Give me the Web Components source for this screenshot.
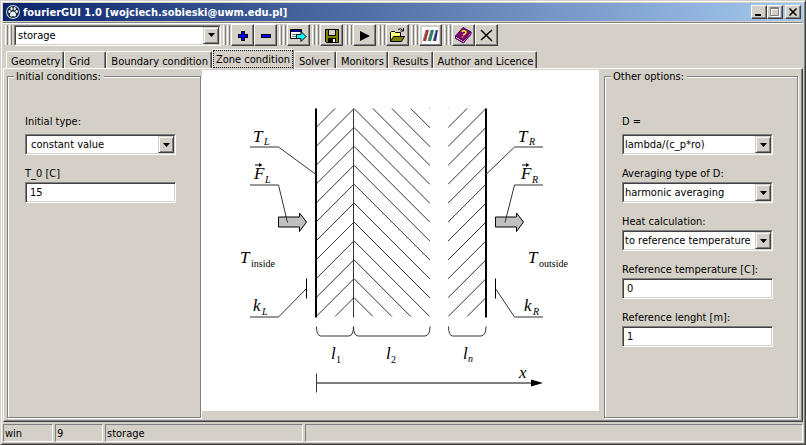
<!DOCTYPE html>
<html lang="en">
<head>
<meta charset="utf-8">
<title>fourierGUI 1.0</title>
<style>
:root{--face:#d4d0c8;--hi:#fff;--sh:#808080;--dk:#404040}
html,body{height:100%;margin:0}
body{background:var(--face);color:#000;font:11px/13px "DejaVu Sans Condensed","DejaVu Sans",sans-serif}
</style>
</head>
<body>
<app-window></app-window>
<script>
const define=(name,html,setup)=>{
  const t=document.createElement('template');
  t.innerHTML=html;
  customElements.define(name,class extends HTMLElement{
    connectedCallback(){
      if(this.shadowRoot)return;
      const root=this.attachShadow({mode:'open'});
      root.append(t.content.cloneNode(true));
      if(setup)setup(this,root);
    }
  });
};

const icons={
  plus:'<path d="M7 4h4v3h3v4h-3v3H7v-3H4V7h3z" fill="#000"/><path d="M8 5h2v3h3v2h-3v3H8v-3H5V8h3z" fill="#00f"/>',
  minus:'<path d="M4 7h10v4H4z" fill="#000"/><path d="M5 8h8v2H5z" fill="#00f"/>',
  send:'<path d="M.5 2.500h11v9H.5z" fill="#fff" stroke="#000"/><path d="M1 3h10v2H1z" fill="#000080"/><path d="M2 7.500h5M2 9.500h5" stroke="#808080"/><path d="M6.500 7.500H11V4.500l5 5-5 5v-3H6.500z" fill="#0ff" stroke="#000"/>',
  save:'<path d="M2.500 2.500h13v13h-12l-1-1z" fill="#808000" stroke="#000"/><path d="M5.500 2.500h7v6h-7z" fill="#d4d0c8" stroke="#000"/><path d="M5 11h8v5H5z" fill="#000"/><path d="M10 12h2v3h-2z" fill="#fff"/>',
  run:'<path d="M4 4l10 5-10 5z" fill="#000"/>',
  open:'<path d="M1.500 14.500v-9l1-1h3l1 1h5v4" fill="#ffff80" stroke="#000"/><path d="M1.500 14.500l3-5h11l-3 5z" fill="#808000" stroke="#000"/><path d="M9 2.500q3-2 5 1M14.500 1v3h-3" fill="none" stroke="#000"/>',
  chart:'<path d="M0 0h17v17H0z" fill="#fff"/><path d="M4 3h3L4 14H1z" fill="#b03030"/><path d="M9 3h3L9 14H6z" fill="#208060"/><path d="M14 3h2l-2 11h-3z" fill="#203080"/><path d="M4 3L1 14M9 3L6 14M14 3l-3 11" stroke="#888" fill="none"/>',
  help:'<path d="M.5 9L8 .5l8 4.500-7.500 9z" fill="#800080" stroke="#400040"/><path d="M.5 9v2.500l8 4.500 7.500-9V5l-7.500 9z" fill="#fff" stroke="#400040"/><path d="M.5 11l8 4.500L16 7" fill="none" stroke="#800080"/><path d="M7 5q1-2 3-1t0 3l-2 1M7.500 9.500v1" fill="none" stroke="#ff0" stroke-width="1.500"/>',
  close:'<path d="M3 3l11 11M14 3L3 13" fill="none" stroke="#000" stroke-width="1.500"/>'
};

define('tool-button',`<style>
:host{display:block}
button{display:grid;place-items:center;width:23px;height:22px;padding:0;background:var(--face);border:1px solid;border-color:var(--hi) var(--dk) var(--dk) var(--hi);box-shadow:inset -1px -1px var(--sh)}
svg{width:17px;height:17px;display:block}
</style><button type="button"><svg viewBox="0 0 17 17"></svg></button>`,(h,r)=>{
  r.querySelector('svg').innerHTML=icons[h.getAttribute('icon')];
  r.querySelector('button').setAttribute('aria-label',h.getAttribute('label'));
});

define('tool-group',`<style>
:host{display:flex;align-items:center}
.grip{width:3px;height:20px;margin-right:1px;box-sizing:border-box;border:solid;border-width:0 1px;border-color:var(--hi) var(--sh) var(--sh) var(--hi)}
</style><span class="grip"></span><span class="grip"></span><slot></slot>`);

const comboStyle=`
.box{display:block;position:relative;height:21px;box-sizing:border-box;background:#fff;border:1px solid;border-color:var(--sh) var(--hi) var(--hi) var(--sh)}
.box select{display:block;width:100%;height:100%;appearance:none;border:1px solid;border-color:var(--dk) var(--face) var(--face) var(--dk);border-radius:0;outline:0;margin:0;padding:0 17px 0 var(--combo-pad,1px);background:#fff;color:#000;font:inherit}
.drop{position:absolute;top:1px;right:1px;bottom:1px;width:16px;box-sizing:border-box;display:grid;place-items:center;pointer-events:none;background:var(--face);border:1px solid;border-color:var(--face) var(--dk) var(--dk) var(--face);box-shadow:inset 1px 1px var(--hi),inset -1px -1px var(--sh)}
.drop svg{width:7px;height:4px;display:block}`;
const comboMarkup='<span class="box"><select id="c"><option></option></select><span class="drop"><svg viewBox="0 0 7 4"><path d="M0 0h7L3.500 4z"/></svg></span></span>';

define('combo-box',`<style>:host{display:block}${comboStyle}</style>${comboMarkup}`,(h,r)=>{
  r.querySelector('option').textContent=h.getAttribute('value');
  r.querySelector('select').setAttribute('aria-label',h.getAttribute('label'));
});

define('form-field',`<style>
:host{display:grid;gap:2px}
:host([lead]){gap:6px}
label{display:block;white-space:nowrap}
input{display:block;width:100%;height:21px;box-sizing:border-box;margin:0;padding:0 4px;border:1px solid;border-color:var(--sh) var(--hi) var(--hi) var(--sh);box-shadow:inset 1px 1px var(--dk),inset -1px -1px var(--face);border-radius:0;outline:0;background:#fff;color:#000;font:inherit}
${comboStyle}
</style><label for="c"></label>`,(h,r)=>{
  const label=r.querySelector('label'),v=h.getAttribute('value');
  label.textContent=h.getAttribute('label');
  if(h.hasAttribute('choice')){
    label.insertAdjacentHTML('afterend',comboMarkup);
    r.querySelector('option').textContent=v;
  }else{
    label.insertAdjacentHTML('afterend','<input id="c" type="text">');
    r.querySelector('input').value=v;
  }
});

define('group-panel',`<style>
:host{display:flex;flex-direction:column}
fieldset{flex:1;box-sizing:border-box;min-width:0;margin:0 1px 0 0;padding:31px 24px 0 17px;border:1px solid var(--sh);box-shadow:1px 1px var(--hi),inset 1px 1px var(--hi)}
legend{margin-left:-11px;padding:1px 3px 0 2px;line-height:14px;background:var(--face)}
.fields{display:grid;gap:12px}
</style><fieldset><legend></legend><div class="fields"><slot></slot></div></fieldset>`,(h,r)=>{
  r.querySelector('legend').textContent=h.getAttribute('heading');
});

define('tab-item',`<style>
:host{display:block;min-width:42px}
:host([selected]){position:relative;margin:-2px 0 -1px}
button{display:block;width:100%;height:17px;padding:2px 3px 0 4px;text-align:left;white-space:nowrap;font:inherit;color:#000;background:var(--face);border:1px solid;border-color:var(--hi) var(--dk) transparent var(--hi);border-bottom:0;border-radius:2px 2px 0 0;box-shadow:inset -1px 0 var(--sh)}
:host([selected]) button{height:20px;padding:0 3px 1px;border-right-color:var(--sh);box-shadow:none;outline:1px dotted #000;outline-offset:-2px}
</style><button type="button" role="tab"><slot></slot></button>`,(h,r)=>{
  r.querySelector('button').setAttribute('aria-selected',h.hasAttribute('selected'));
});

define('title-bar',`<style>
:host{display:flex;align-items:center;height:18px;padding:0 2px 0 3px;color:#fff;background:linear-gradient(90deg,#0a246a,#a6caf0)}
h1{flex:1;margin:0 0 0 3px;font:inherit;font-weight:700;white-space:nowrap}
.logo{width:14px;height:14px}
button{display:block;width:16px;height:14px;padding:0;background:var(--face);border:1px solid;border-color:var(--hi) var(--dk) var(--dk) var(--hi);box-shadow:inset -1px -1px var(--sh)}
button:last-child{margin-left:2px}
button svg{display:block;width:14px;height:12px}
</style>
<svg class="logo" viewBox="0 0 14 14"><circle cx="7" cy="7" r="7" fill="#c8d4e0"/><circle cx="7" cy="7" r="6" fill="#182838"/><g fill="#e8f0f8"><ellipse cx="3.500" cy="6.500" rx="1.200" ry="1.600"/><ellipse cx="5.500" cy="3.700" rx="1.200" ry="1.700"/><ellipse cx="8.700" cy="3.700" rx="1.200" ry="1.700"/><ellipse cx="10.700" cy="6.500" rx="1.200" ry="1.600"/><path d="M7 6.500c2 0 3.500 2.500 3 4s-2 .8-3 .8-2.500.7-3-.8 1-4 3-4z"/></g></svg>
<h1><slot></slot></h1>
<button type="button" aria-label="Minimize"><svg viewBox="0 0 14 12"><path d="M3 8h6v2H3z"/></svg></button>
<button type="button" aria-label="Maximize" disabled><svg viewBox="0 0 14 12" fill="none"><path d="M3.500 2.500h8v8h-8zM3 3.500h9" stroke="#fff"/><path d="M2.500 1.500h8v8h-8zM2 2.500h9" stroke="#808080"/></svg></button>
<button type="button" aria-label="Close"><svg viewBox="0 0 14 12"><path d="M3.500 2.500l7 7M10.500 2.500l-7 7" stroke="#000" stroke-width="1.500"/></svg></button>`);

define('status-cell',`<style>
:host{display:block;box-sizing:border-box;height:18px;padding:2px 0 0 1px;border:1px solid;border-color:var(--sh) var(--hi) var(--hi) var(--sh);white-space:nowrap}
</style><slot></slot>`);

define('wall-diagram',`<style>
:host{display:block;background:#fff;min-width:0}
svg{display:block;width:100%;height:100%}
text{font:italic 17px "Liberation Serif",serif;fill:#000}
.s{font-size:10px}.u{font-style:normal}
.l{fill:none;stroke:#333}.w{stroke:#000;stroke-width:2}
</style>
<svg viewBox="202 70 397 340" role="img" aria-label="Layered wall with boundary conditions">
<clipPath id="a"><path d="M316 108h38v208h-38z"/></clipPath>
<clipPath id="b"><path d="M354 108h76v208h-76z"/></clipPath>
<clipPath id="c"><path d="M448 108h38v208h-38z"/></clipPath>
<path id="ha" class="l" clip-path="url(#a)"/><path id="hb" class="l" clip-path="url(#b)"/><path id="hc" class="l" clip-path="url(#c)"/>
<path class="w" d="M316 108v209M486 108v209"/>
<path class="l" d="M353.500 108v209M250 146.500h28.500L316 174M250 184.500h28.500L287.500 222M250 316.500h28.500L306.500 288M543 146.500h-28.500L486 174M543 184.500h-28.500L505 222M543 316.500h-28.500L495.500 288"/>
<path d="M306.500 278v20M495.500 278v20M316 382.500h218" stroke="#000"/>
<path class="l" d="M316.500 373v19"/>
<path d="M531 379l12 3.500-12 3.500z"/>
<g fill="#c0c0c0" stroke="#000"><path d="M278.500 216.500h21v-4l7 9-7 9.500v-4.500h-21z"/><path d="M495.500 216.500h21v-4l7 9-7 9.500v-4.500h-21z"/></g>
<path class="l" d="M286 216l1.500 6M506.500 216l-1.500 6"/>
<path class="l" d="M316.500 326q0 9 4 9.500H349q4.500-.5 4.500-9.500 0 9 4.500 9.500h67q5-.5 5-9.500M448.500 326q0 9 4 9.500H481q5-.5 5-9.500"/>
<path d="M255 164.500h5M522 164.500h5" stroke="#000"/><path d="M259 162.500l3.500 2-3.500 2zM526 162.500l3.500 2-3.500 2z"/>
<text x="253" y="141">T</text><text class="s" x="264" y="144">L</text>
<text x="254" y="178">F</text><text class="s" x="265" y="182">L</text>
<text x="240" y="262">T</text><text class="s u" x="251" y="266">inside</text>
<text x="253" y="310">k</text><text class="s" x="262" y="314">L</text>
<text x="518" y="141">T</text><text class="s" x="529" y="144">R</text>
<text x="521" y="178">F</text><text class="s" x="532" y="182">R</text>
<text x="528" y="262">T</text><text class="s u" x="539" y="266">outside</text>
<text x="524" y="310">k</text><text class="s" x="533" y="314">R</text>
<text x="331" y="358">l</text><text class="s u" x="336" y="362">1</text>
<text x="386" y="358">l</text><text class="s u" x="391" y="362">2</text>
<text x="463" y="358">l</text><text class="s" x="468" y="361">n</text>
<text x="519" y="377">x</text>
</svg>`,(h,r)=>{
  const step=208/11;
  let a='',b='',c='';
  for(let k=-4;k<15;k++){
    const y=108+k*step;
    a+=`M316 ${y+38}l38-38`;
    b+=`M354 ${y}l76 76`;
    c+=`M448 ${y+38}l38-38`;
  }
  r.querySelector('#ha').setAttribute('d',a);
  r.querySelector('#hb').setAttribute('d',b);
  r.querySelector('#hc').setAttribute('d',c);
});

define('app-window',`<style>
:host{display:flex;flex-direction:column;box-sizing:border-box;min-height:100vh;padding:2px;border:1px solid;border-color:var(--face) var(--dk) var(--dk) var(--face);box-shadow:inset 1px 1px var(--hi),inset -1px -1px var(--sh)}
.tools{display:flex;align-items:center;gap:2px;height:22px;margin-top:1px;padding:1px 2px 0;border-top:1px solid var(--sh);box-shadow:inset 0 1px var(--hi)}
.tools combo-box{width:207px;margin-left:1px;--combo-pad:2px}
.tabs{display:flex;align-items:flex-start;margin-top:5px;padding-left:3px}
main{flex:1;display:grid;grid-template-columns:195px minmax(0,1fr) 195px;padding:0 3px 3px;border:1px solid;border-color:var(--hi) var(--dk) var(--dk) var(--hi);box-shadow:inset -1px -1px var(--sh)}
wall-diagram{margin:1px 5px 7px 0}
.left{--combo-pad:4px}
footer{display:flex;gap:2px;padding-top:2px}
footer .a{width:50px}footer .b{width:48px}footer .c{width:198px}footer .d{flex:1}
</style>
<title-bar>fourierGUI 1.0 [wojciech.sobieski@uwm.edu.pl]</title-bar>
<div class="tools">
<tool-group><combo-box label="Case" value="storage"></combo-box></tool-group>
<tool-group><tool-button icon="plus" label="Add"></tool-button><tool-button icon="minus" label="Remove"></tool-button></tool-group>
<tool-group><tool-button icon="send" label="Export"></tool-button></tool-group>
<tool-group><tool-button icon="save" label="Save"></tool-button></tool-group>
<tool-group><tool-button icon="run" label="Run"></tool-button></tool-group>
<tool-group><tool-button icon="open" label="Open"></tool-button></tool-group>
<tool-group><tool-button icon="chart" label="Chart"></tool-button></tool-group>
<tool-group><tool-button icon="help" label="Help"></tool-button><tool-button icon="close" label="Exit"></tool-button></tool-group>
</div>
<div class="tabs" role="tablist"><tab-item>Geometry</tab-item><tab-item>Grid</tab-item><tab-item>Boundary condition</tab-item><tab-item selected>Zone condition</tab-item><tab-item>Solver</tab-item><tab-item>Monitors</tab-item><tab-item>Results</tab-item><tab-item>Author and Licence</tab-item></div>
<main>
<group-panel class="left" heading="Initial conditions:">
<form-field lead choice label="Initial type:" value="constant value"></form-field>
<form-field label="T_0 [C]" value="15"></form-field>
</group-panel>
<wall-diagram></wall-diagram>
<group-panel heading="Other options:">
<form-field lead choice label="D =" value="lambda/(c_p*ro)"></form-field>
<form-field choice label="Averaging type of D:" value="harmonic averaging"></form-field>
<form-field choice label="Heat calculation:" value="to reference temperature"></form-field>
<form-field label="Reference temperature [C]:" value="0"></form-field>
<form-field label="Reference lenght [m]:" value="1"></form-field>
</group-panel>
</main>
<footer><status-cell class="a">win</status-cell><status-cell class="b">9</status-cell><status-cell class="c">storage</status-cell><status-cell class="d"></status-cell></footer>`);
</script>
</body>
</html>
